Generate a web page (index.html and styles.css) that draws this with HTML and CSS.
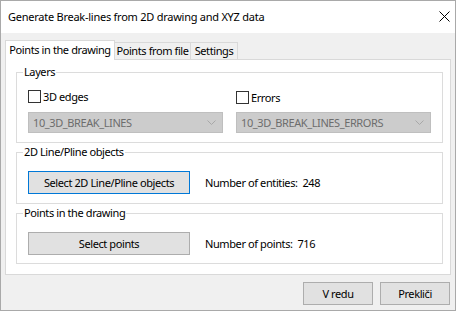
FILE: index.html
```html
<!DOCTYPE html>
<html>
<head>
<meta charset="utf-8">
<link rel="stylesheet" href="styles.css">
</head>
<body>
<div class="window">
  <div class="titlebar">
    <span class="title">Generate Break-lines from 2D drawing and XYZ data</span>
    <svg class="close" width="11" height="11" viewBox="0 0 11 11"><path d="M0.5 0.5L10.5 10.5M10.5 0.5L0.5 10.5" stroke="#000" stroke-width="1" fill="none"/></svg>
  </div>
  <div class="body">
    <div class="tabs">
      <div class="tab tab-active">Points in the drawing</div>
      <div class="tab tab-file">Points from file</div>
      <div class="tab tab-settings">Settings</div>
    </div>
    <div class="panel">
      <fieldset class="group group-layers">
        <legend>Layers</legend>
        <div class="layers-grid">
          <label class="check"><span class="box"></span>3D edges</label>
          <label class="check check-err"><span class="box"></span>Errors</label>
          <div class="combo"><span>10_3D_BREAK_LINES</span><svg width="9" height="5" viewBox="0 0 9 5"><path d="M0.5 0.5L4.5 4.5L8.5 0.5" stroke="#a8a8a8" fill="none"/></svg></div>
          <div class="combo"><span>10_3D_BREAK_LINES_ERRORS</span><svg width="9" height="5" viewBox="0 0 9 5"><path d="M0.5 0.5L4.5 4.5L8.5 0.5" stroke="#a8a8a8" fill="none"/></svg></div>
        </div>
      </fieldset>
      <fieldset class="group group-lines">
        <legend>2D Line/Pline objects</legend>
        <div class="row">
          <button class="btn btn-wide btn-default">Select 2D Line/Pline objects</button>
          <span class="count">Number of entities:&nbsp; 248</span>
        </div>
      </fieldset>
      <fieldset class="group group-points">
        <legend>Points in the drawing</legend>
        <div class="row">
          <button class="btn btn-wide">Select points</button>
          <span class="count">Number of points:&nbsp; 716</span>
        </div>
      </fieldset>
    </div>
    <div class="footer">
      <button class="btn btn-foot">V redu</button>
      <button class="btn btn-foot">Prekliči</button>
    </div>
  </div>
</div>
</body>
</html>
```
FILE: styles.css
```css
* { box-sizing: border-box; }
html, body { margin: 0; padding: 0; }
body {
  font-family: "Noto Sans", "Open Sans", sans-serif;
  font-size: 11px;
  letter-spacing: -0.4px;
  color: #000;
  background: #fff;
}
.window {
  width: 456px;
  height: 311px;
  border: 1px solid #a9a9a9;
  background: #f0f0f0;
  display: flex;
  flex-direction: column;
}
.titlebar {
  height: 32px;
  background: #fff;
  display: flex;
  align-items: center;
  justify-content: space-between;
  padding: 0 5px 2px 7px;
}
.title { font-size: 11px; letter-spacing: -0.25px; }
.close { display: block; }
.body {
  flex: 1;
  padding: 7px 4px 0 4px;
  display: flex;
  flex-direction: column;
}
.tabs {
  display: flex;
  align-items: flex-end;
  height: 19px;
}
.tab {
  height: 17px;
  border: 1px solid #d9d9d9;
  border-bottom: none;
  background: #f0f0f0;
  text-align: center;
  line-height: 16px;
  white-space: nowrap;
}
.tab-active {
  height: 20px;
  width: 110px;
  background: #fff;
  margin-bottom: -1px;
  position: relative;
  z-index: 1;
  line-height: 17px;
}
.tab-file { width: 77px; margin-left: -1px; }
.tab-settings { width: 48px; margin-left: -1px; }
.panel {
  height: 216px;
  background: #fff;
  border: 1px solid #d9d9d9;
  padding: 5px 7px 0 10px;
  display: flex;
  flex-direction: column;
  gap: 2px;
}
.group {
  margin: 0;
  padding: 0 10px 0 11px;
  border: 1px solid #dcdcdc;
  min-width: 0;
}
.group legend {
  padding: 0 1px;
  margin-left: -5px;
  line-height: 14px;
  height: 14px;
}
.layers-grid {
  display: grid;
  grid-template-columns: 195px 195px;
  column-gap: 13px;
  padding: 10px 0 9px 0;
  row-gap: 7px;
}
.check {
  display: flex;
  align-items: center;
  height: 15px;
  gap: 2px;
}
.check-err { margin-top: 1px; }
.box {
  width: 13px;
  height: 13px;
  border: 1px solid #333;
  background: #fff;
}
.combo {
  height: 21px;
  background: #cccccc;
  border: 1px solid #bfbfbf;
  color: #6d6d6d;
  display: flex;
  align-items: center;
  justify-content: space-between;
  padding: 0 6px 0 4px;
}
.combo svg { display: block; }
.row {
  display: flex;
  align-items: center;
  gap: 15px;
  padding: 12px 0 9px 0;
}
.group-points .row { padding-bottom: 8px; }
.btn {
  font-family: inherit;
  font-size: 11px;
  letter-spacing: -0.4px;
  color: #000;
  background: #e1e1e1;
  border: 1px solid #adadad;
  height: 23px;
  padding: 0;
  margin: 0;
}
.btn-wide { width: 162px; }
.btn-default { border-color: #0078d7; }
.footer {
  flex: 1;
  display: flex;
  justify-content: flex-end;
  align-items: flex-start;
  gap: 7px;
  padding: 7px 1px 0 0;
}
.btn-foot { width: 70px; }
```
